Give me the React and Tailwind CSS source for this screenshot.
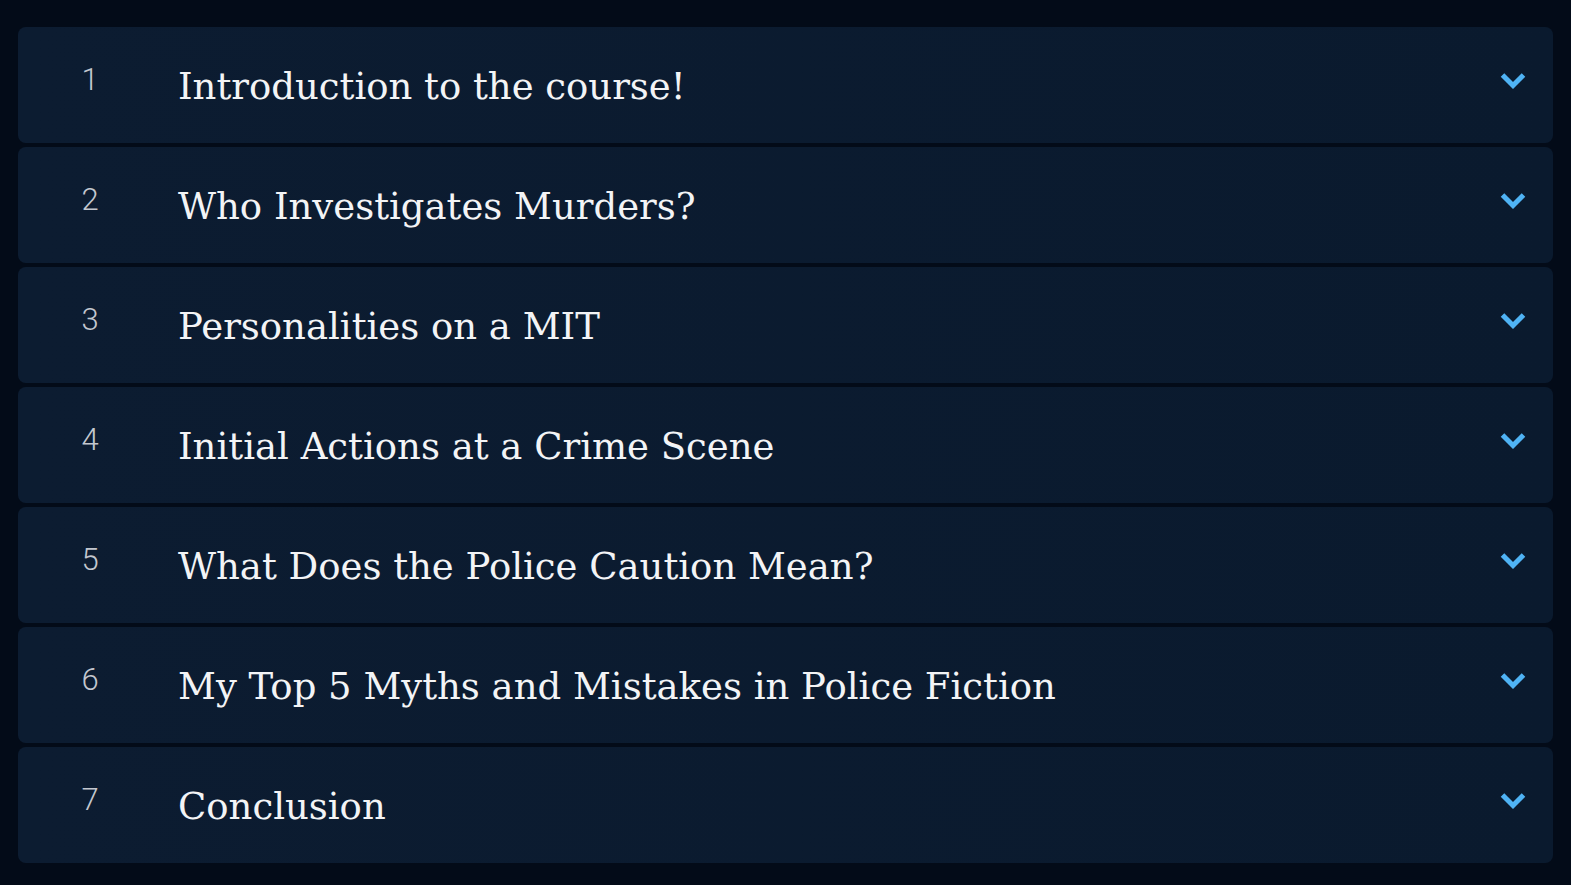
import React from 'react';

const lessons = [
    'Introduction to the course!',
    'Who Investigates Murders?',
    'Personalities on a MIT',
    'Initial Actions at a Crime Scene',
    'What Does the Police Caution Mean?',
    'My Top 5 Myths and Mistakes in Police Fiction',
    'Conclusion',
];

function Chevron() {
    return (
        <svg width="26" height="18" viewBox="0 0 26 18" className="mb-[9px] shrink-0 text-[#4fb3f4]">
            <path d="M2.5 3 L13 13.5 L23.5 3" fill="none" stroke="currentColor" strokeWidth="5" strokeLinejoin="miter" />
        </svg>
    );
}

function LessonRow({ num, title }) {
    return (
        <div className="flex h-[116px] items-center rounded-lg bg-gradient-to-r from-[#0c1c31] to-[#0a1a2e] pr-[27px]">
            <span className="mb-[11px] w-[144px] shrink-0 text-center font-['Roboto'] text-[31px] font-light leading-none text-[#c3c7cf]">
                {num}
            </span>
            <span className="ml-4 mt-[2px] flex-1 font-['DejaVu_Serif',serif] text-[37px] leading-none text-[#f3f4f6]">
                {title}
            </span>
            <Chevron />
        </div>
    );
}

export default function App() {
    return (
        <div className="min-h-screen bg-[#030b18] px-[18px] pt-[27px] pb-[22px]">
            <div className="flex flex-col gap-1">
                {lessons.map((t, i) => (
                    <LessonRow key={i} num={i + 1} title={t} />
                ))}
            </div>
        </div>
    );
}
